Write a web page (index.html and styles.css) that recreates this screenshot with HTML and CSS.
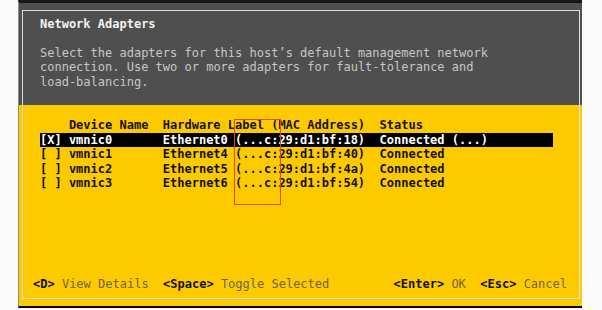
FILE: index.html
```html
<!DOCTYPE html>
<html lang="en">
<head>
    <meta charset="utf-8" />
    <meta name="viewport" content="width=device-width, initial-scale=1" />
    <title>Network Adapters</title>
    <link rel="stylesheet" href="styles.css">
</head>
<body>
    <div class="screen">
        <div class="frame">
            <div class="dialog-head">
                <h1>Network Adapters</h1>
                <p class="description">Select the adapters for this host’s default management network
connection. Use two or more adapters for fault-tolerance and
load-balancing.</p>
            </div>

            <div class="adapter-list">
                <div class="row row-head">
                    <span></span>
                    <span>Device Name</span>
                    <span>Hardware Label (MAC Address)</span>
                    <span>Status</span>
                </div>
                <div class="row selected">
                    <span>[X]</span>
                    <span>vmnic0</span>
                    <span>Ethernet0 (...c:29:d1:bf:18)</span>
                    <span>Connected (...)</span>
                </div>
                <div class="row">
                    <span>[ ]</span>
                    <span>vmnic1</span>
                    <span>Ethernet4 (...c:29:d1:bf:40)</span>
                    <span>Connected</span>
                </div>
                <div class="row">
                    <span>[ ]</span>
                    <span>vmnic2</span>
                    <span>Ethernet5 (...c:29:d1:bf:4a)</span>
                    <span>Connected</span>
                </div>
                <div class="row">
                    <span>[ ]</span>
                    <span>vmnic3</span>
                    <span>Ethernet6 (...c:29:d1:bf:54)</span>
                    <span>Connected</span>
                </div>
            </div>

            <div class="keys">
                <div class="key-group"><span class="key">&lt;D&gt;</span> <span class="action">View Details</span>  <span class="key">&lt;Space&gt;</span> <span class="action">Toggle Selected</span></div>
                <div class="key-group"><span class="key">&lt;Enter&gt;</span> <span class="action">OK</span>  <span class="key">&lt;Esc&gt;</span> <span class="action">Cancel</span></div>
            </div>
        </div>

        <!-- annotation drawn over the screenshot -->
        <div class="highlight-box"></div>
    </div>
</body>
</html>
```

FILE: styles.css
```css
* {
    margin: 0;
    padding: 0;
    box-sizing: border-box;
}

body {
    background: #fafafa;
    font-family: "DejaVu Sans Mono", "Liberation Mono", monospace;
    font-size: 12px;
    line-height: 14.5px;
}

.screen {
    position: relative;
    margin-left: 18px;
    width: 564px;
    height: 308px;
    border-left: 1px solid #8c8c8c;
    border-top: 3px solid #161616;
    border-bottom: 2px solid #050505;
    background: linear-gradient(to bottom, #4f4f4f 0, #4f4f4f 102px, #fdca00 102px);
    padding: 7px 2px 7px 3px;
}

.frame {
    height: 100%;
    border: 1px solid #dedede;
    display: flex;
    flex-direction: column;
}

.dialog-head {
    padding: 6px 17px 0;
    height: 93px;
}

h1 {
    font-size: 12px;
    font-weight: bold;
    color: #f2f2f2;
}

.description {
    margin-top: 14px;
    color: #c6c6c6;
    white-space: pre;
}

.adapter-list {
    padding: 14px 0 0 17px;
    flex: 1;
}

.row {
    display: grid;
    grid-template-columns: 4ch 13ch 30ch 24ch;
    width: 71ch;
    color: #111;
    font-weight: bold;
    white-space: pre;
}

.row.selected {
    background: #000;
    color: #fff;
}

.keys {
    display: flex;
    justify-content: space-between;
    padding: 0 12px 7px 10px;
}

.key-group {
    white-space: pre;
}

.key {
    color: #111;
    font-weight: bold;
}

.action {
    color: #6f6540;
}

.highlight-box {
    position: absolute;
    left: 215px;
    top: 116px;
    width: 47px;
    height: 86px;
    border: 1px solid #e2471c;
}
```
